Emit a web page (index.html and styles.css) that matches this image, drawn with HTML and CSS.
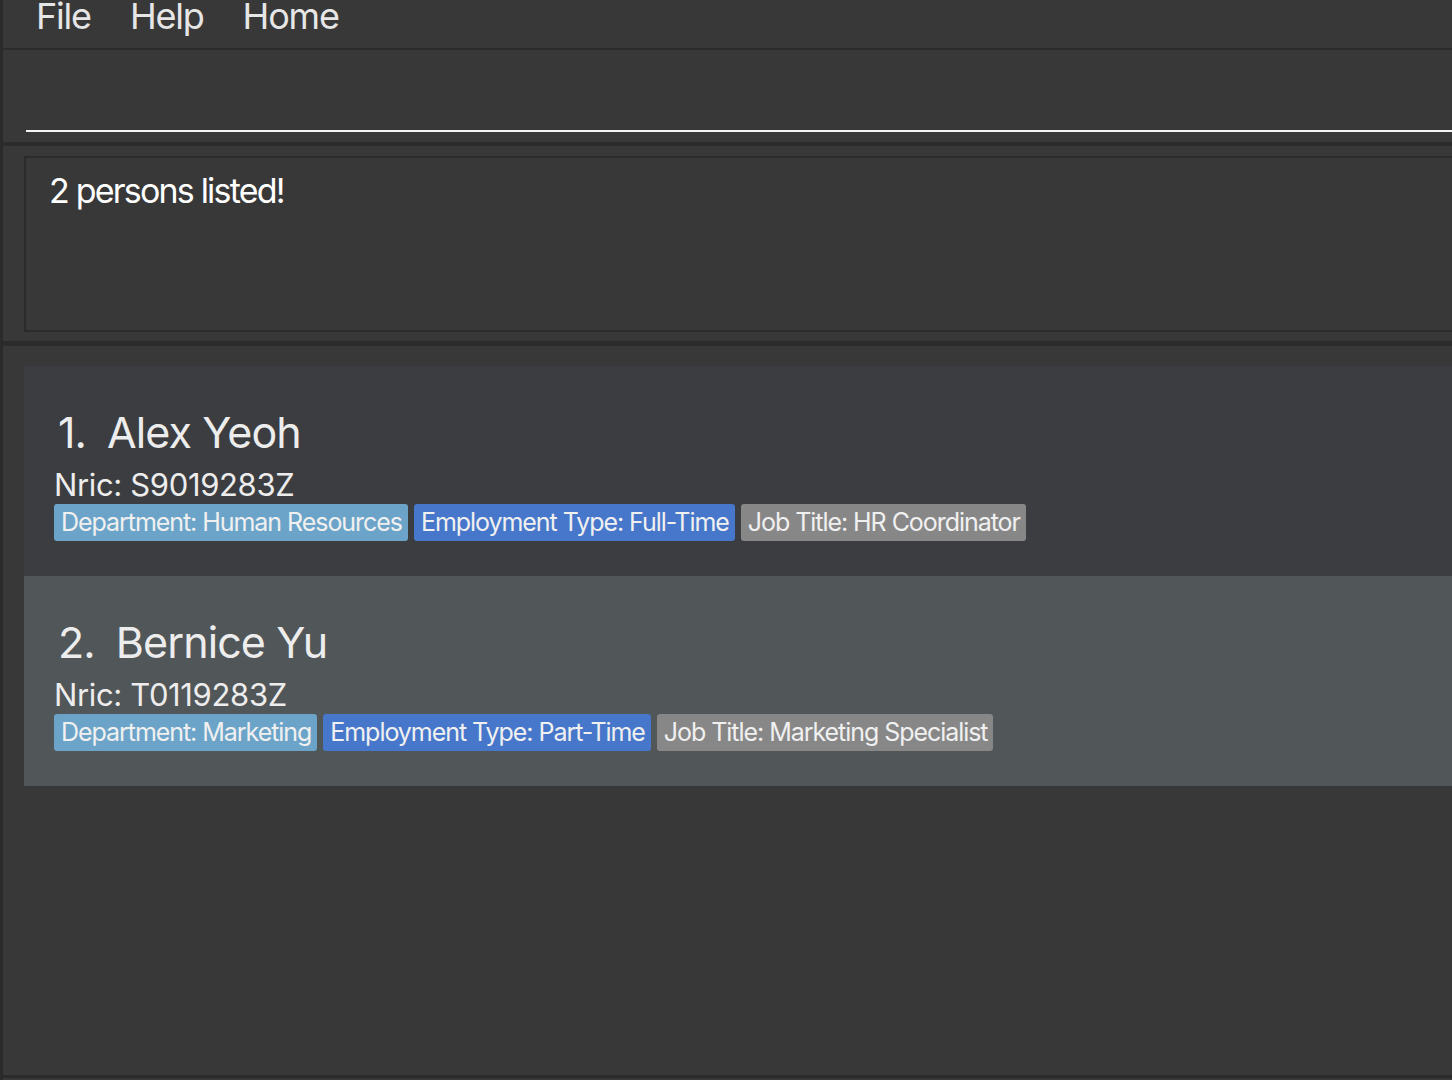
FILE: index.html
```html
<!DOCTYPE html>
<html>
<head>
<meta charset="utf-8">
<link rel="stylesheet" href="styles.css">
</head>
<body>
<div class="app">
  <div class="menubar">
    <span class="menu-item">File</span>
    <span class="menu-item">Help</span>
    <span class="menu-item">Home</span>
  </div>
  <div class="command-area">
    <div class="command-input"></div>
  </div>
  <div class="sep sep-4"></div>
  <div class="result-area">
    <div class="result-box">2 persons listed!</div>
  </div>
  <div class="sep sep-5"></div>
  <div class="list-area">
    <div class="card card-odd">
      <div class="name-row"><span class="pid">1.</span><span class="pname">Alex Yeoh</span></div>
      <div class="nric">Nric: S9019283Z</div>
      <div class="tags">
        <span class="tag tag-dept">Department: Human Resources</span>
        <span class="tag tag-emp">Employment Type: Full-Time</span>
        <span class="tag tag-job">Job Title: HR Coordinator</span>
      </div>
    </div>
    <div class="card card-even">
      <div class="name-row"><span class="pid">2.</span><span class="pname">Bernice Yu</span></div>
      <div class="nric">Nric: T0119283Z</div>
      <div class="tags">
        <span class="tag tag-dept">Department: Marketing</span>
        <span class="tag tag-emp">Employment Type: Part-Time</span>
        <span class="tag tag-job">Job Title: Marketing Specialist</span>
      </div>
    </div>
  </div>
  <div class="bottom-line"></div>
</div>
</body>
</html>
```

FILE: styles.css
```css
html, body {
  margin: 0;
  padding: 0;
  background: #383838;
  font-family: Inter, "Liberation Sans", sans-serif;
  overflow: hidden;
}
.app {
  height: 1080px;
  border-left: 3px solid #2a2a2a;
  display: flex;
  flex-direction: column;
  box-sizing: border-box;
}
.menubar {
  height: 48px;
  border-bottom: 2px solid #2b2b2b;
  display: flex;
  gap: 39px;
  padding-left: 33px;
  overflow: hidden;
}
.menu-item {
  font-size: 36px;
  line-height: 32px;
  color: #e6e6e6;
  letter-spacing: -1.2px;
}
.command-area {
  height: 92px;
  display: flex;
  align-items: flex-end;
  padding: 0 0 10px 23px;
  box-sizing: border-box;
}
.command-input {
  flex: 1;
  height: 40px;
  border-bottom: 2px solid #f4f4f4;
}
.sep {
  background: #2b2b2b;
}
.sep-4 { height: 4px; }
.sep-5 { height: 5px; }
.result-area {
  height: 195px;
  padding: 10px 0 0 21px;
  box-sizing: border-box;
}
.result-box {
  height: 176px;
  box-sizing: border-box;
  border: 2px solid #2b2b2b;
  border-right: none;
  padding: 16px 0 0 23px;
  font-size: 34px;
  line-height: 34px;
  color: #ffffff;
  letter-spacing: -1.8px;
}
.list-area {
  flex: 1;
  padding: 20px 0 0 21px;
}
.card {
  height: 210px;
  box-sizing: border-box;
  padding: 45px 0 0 30px;
  display: flex;
  flex-direction: column;
}
.card-odd { background: #3c3d40; }
.card-even { background: #515659; }
.name-row {
  display: flex;
  gap: 21px;
  font-size: 43px;
  line-height: 43px;
  color: #ededed;
  letter-spacing: -0.9px;
  padding-left: 4px;
}
.nric {
  margin-top: 15px;
  font-size: 31px;
  line-height: 31px;
  color: #ededed;
  letter-spacing: -0.35px;
}
.tags {
  margin-top: 4px;
  display: flex;
  gap: 6px;
}
.tag {
  height: 37px;
  line-height: 37px;
  font-size: 25px;
  padding: 0 6px 0 7px;
  border-radius: 3px;
  color: #f0f0f0;
  letter-spacing: -1.05px;
  white-space: nowrap;
}
.tag-dept { background: #6ba4c8; }
.tag-emp { background: #4677ca; }
.tag-job { background: #888787; }
.bottom-line {
  height: 3px;
  background: #2b2b2b;
  margin-bottom: 2px;
}
```
